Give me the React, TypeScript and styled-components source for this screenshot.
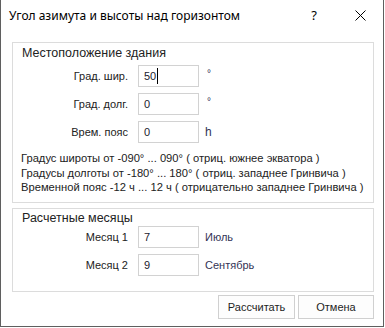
import React from "react";
import styled, { createGlobalStyle } from "styled-components";

const GlobalStyle = createGlobalStyle`
  html, body {
    margin: 0;
    padding: 0;
    background: #ffffff;
  }
  body {
    font-family: "Liberation Sans", Arial, sans-serif;
    color: #1e1e1e;
  }
`;

const Window = styled.div`
  width: 384px;
  height: 327px;
  box-sizing: border-box;
  border: 1px solid #5f5f5f;
  border-top: none;
  background: #ffffff;
  display: flex;
  flex-direction: column;
`;

const TitleBar = styled.div`
  height: 30px;
  display: flex;
  align-items: center;
  flex-shrink: 0;
`;

const Title = styled.div`
  flex: 1;
  padding-left: 8px;
  font-family: "Noto Sans", "Liberation Sans", sans-serif;
  font-size: 12px;
  color: #000000;
`;

const TitleButton = styled.div`
  width: 46px;
  height: 30px;
  display: flex;
  align-items: center;
  justify-content: center;
  font-family: "Noto Sans", sans-serif;
  font-size: 13px;
  color: #000000;
`;

const Body = styled.div`
  padding: 12px 9px 0 11px;
  display: flex;
  flex-direction: column;
  gap: 5px;
`;

const Group = styled.div<{ $pad: number }>`
  border: 1px solid #dcdcdc;
  padding: 0 0 ${({ $pad }) => $pad}px 0;
  display: flex;
  flex-direction: column;
`;

const GroupTitle = styled.div<{ $top: number }>`
  margin: ${({ $top }) => $top}px 0 0 9px;
  font-size: 12.5px;
  line-height: 16px;
  color: #222222;
`;

const Rows = styled.div<{ $top: number }>`
  margin-top: ${({ $top }) => $top}px;
  display: grid;
  grid-template-columns: 115px 61px auto;
  column-gap: 10px;
  row-gap: 6px;
  align-items: center;
`;

const Label = styled.div`
  text-align: right;
  font-size: 11px;
  color: #222222;
`;

const Field = styled.div`
  height: 22px;
  box-sizing: border-box;
  border: 1px solid #d2d2d2;
  padding: 2px 0 0 5px;
  font-size: 11px;
  line-height: 16px;
  color: #1a1a2e;
  display: flex;
  align-items: flex-start;
`;

const Caret = styled.span`
  display: inline-block;
  width: 1px;
  height: 16px;
  background: #000000;
  margin-left: 1px;
`;

const Unit = styled.div<{ $size?: number; $dx?: number }>`
  font-size: ${({ $size }) => $size ?? 11}px;
  color: #333355;
  margin-left: ${({ $dx }) => $dx ?? -4}px;
`;

const Degree = styled(Unit)`
  font-size: 10px;
  margin-top: -5px;
`;

const Info = styled.div`
  margin: 8px 0 0 8px;
  font-size: 11.2px;
  line-height: 14.5px;
  color: #222222;
`;

const Footer = styled.div`
  display: flex;
  justify-content: flex-end;
  gap: 3px;
  padding: 3px 9px 0 0;
`;

const Button = styled.div<{ $w: number }>`
  width: ${({ $w }) => $w}px;
  height: 24px;
  box-sizing: border-box;
  border: 1px solid #d0d0d0;
  background: #fdfdfd;
  display: flex;
  align-items: center;
  justify-content: center;
  font-size: 11px;
  color: #1e1e1e;
`;

const CloseIcon = () => (
  <svg width="11" height="11" viewBox="0 0 11 11">
    <path d="M0.5 0.5 L10.5 10.5 M10.5 0.5 L0.5 10.5" stroke="#000" strokeWidth="1" />
  </svg>
);

export default function App() {
  return (
    <>
      <GlobalStyle />
      <Window>
        <TitleBar>
          <Title>Угол азимута и высоты над горизонтом</Title>
          <TitleButton>?</TitleButton>
          <TitleButton>
            <CloseIcon />
          </TitleButton>
        </TitleBar>
        <Body>
          <Group $pad={7}>
            <GroupTitle $top={2}>Местоположение здания</GroupTitle>
            <Rows $top={4}>
              <Label>Град. шир.</Label>
              <Field>
                50
                <Caret />
              </Field>
              <Degree $dx={-2}>°</Degree>
              <Label>Град. долг.</Label>
              <Field>0</Field>
              <Degree $dx={-2}>°</Degree>
              <Label>Врем. пояс</Label>
              <Field>0</Field>
              <Unit $size={12} $dx={-4}>h</Unit>
            </Rows>
            <Info>
              <div>Градус широты от -090° ... 090° ( отриц. южнее экватора )</div>
              <div>Градусы долготы от -180° ... 180° ( отриц. западнее Гринвича )</div>
              <div>Временной пояс -12 ч ... 12 ч ( отрицательно западнее Гринвича )</div>
            </Info>
          </Group>
          <Group $pad={15}>
            <GroupTitle $top={1}>Расчетные месяцы</GroupTitle>
            <Rows $top={0}>
              <Label>Месяц 1</Label>
              <Field>7</Field>
              <Unit $dx={-4}>Июль</Unit>
              <Label>Месяц 2</Label>
              <Field>9</Field>
              <Unit $dx={-4}>Сентябрь</Unit>
            </Rows>
          </Group>
        </Body>
        <Footer>
          <Button $w={77}>Рассчитать</Button>
          <Button $w={76}>Отмена</Button>
        </Footer>
      </Window>
    </>
  );
}
